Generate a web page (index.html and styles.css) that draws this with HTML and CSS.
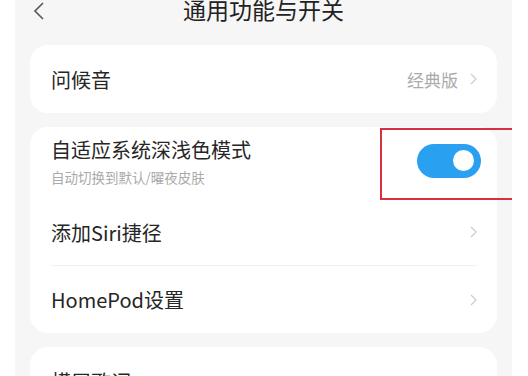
FILE: index.html
```html
<!DOCTYPE html>
<html lang="zh">
<head>
    <meta charset="UTF-8">
    <meta name="viewport" content="width=device-width, initial-scale=1.0">
    <title>通用功能与开关</title>
    <link rel="stylesheet" href="styles.css">
</head>
<body>

<div class="screen">
    <div class="header">
        <svg class="back" width="12" height="18" viewBox="0 0 12 18">
            <path d="M10 1 L2 9 L10 17" fill="none" stroke="#555" stroke-width="1.6"/>
        </svg>
        <div class="title">通用功能与开关</div>
    </div>

    <div class="card">
        <div class="row">
            <div class="label">问候音</div>
            <div class="value">经典版</div>
            <svg class="arrow" width="7" height="12" viewBox="0 0 7 12">
                <path d="M1 1 L6 6 L1 11" fill="none" stroke="#ccc" stroke-width="1.2"/>
            </svg>
        </div>
    </div>

    <div class="card">
        <div class="row row-tall">
            <div class="text">
                <div class="label">自适应系统深浅色模式</div>
                <div class="sub">自动切换到默认/曜夜皮肤</div>
            </div>
            <div class="switch"><span class="knob"></span></div>
            <div class="mark"></div>
        </div>
        <div class="row row-short">
            <div class="label">添加Siri捷径</div>
            <svg class="arrow" width="7" height="12" viewBox="0 0 7 12">
                <path d="M1 1 L6 6 L1 11" fill="none" stroke="#ccc" stroke-width="1.2"/>
            </svg>
        </div>
        <div class="row line">
            <div class="label">HomePod设置</div>
            <svg class="arrow" width="7" height="12" viewBox="0 0 7 12">
                <path d="M1 1 L6 6 L1 11" fill="none" stroke="#ccc" stroke-width="1.2"/>
            </svg>
        </div>
    </div>

    <div class="card">
        <div class="row">
            <div class="label">横屏歌词</div>
        </div>
    </div>
</div>

</body>
</html>
```

FILE: styles.css
```css
body {
    margin: 0;
    background-color: #fff;
    font-family: "Noto Sans CJK SC", "Noto Sans", sans-serif;
    color: #222;
    overflow: hidden;
}
.screen {
    width: 467px;
    height: 376px;
    margin-left: 15px;
    padding: 0 15px;
    background-color: #f6f6f6;
    overflow: hidden;
}
.header {
    height: 45px;
    display: flex;
    justify-content: center;
    position: relative;
}
.back {
    position: absolute;
    left: 3px;
    top: 2px;
}
.title {
    font-size: 23px;
    line-height: 24px;
    margin-top: -3px;
    color: #222;
}
.card {
    background-color: #fff;
    border-radius: 18px;
    margin-bottom: 14px;
    padding: 0 20px 0 21px;
}
.row {
    height: 68px;
    display: flex;
    align-items: center;
    position: relative;
}
.row-tall {
    height: 72px;
}
.row-short {
    height: 66px;
}
.row.line {
    border-top: 1px solid #f1f1f1;
    height: 67px;
}
.label {
    flex: 1;
    font-size: 20px;
    color: #262626;
}
.value {
    font-size: 17px;
    color: #aaa;
    margin-right: 12px;
}
.text {
    flex: 1;
    margin-top: -4px;
}
.sub {
    font-size: 13.5px;
    color: #aaa;
    margin-top: 3px;
}
.switch {
    width: 64px;
    height: 34px;
    border-radius: 17px;
    background-color: #2aa0f0;
    display: flex;
    align-items: center;
    justify-content: flex-end;
    margin-right: -4px;
    margin-top: -5px;
}
.knob {
    width: 21px;
    height: 21px;
    border-radius: 50%;
    background-color: #fff;
    margin-right: 7px;
}
.mark {
    position: absolute;
    left: 329px;
    top: 1px;
    width: 130px;
    height: 68px;
    border: 2px solid #d9303e;
}
```
